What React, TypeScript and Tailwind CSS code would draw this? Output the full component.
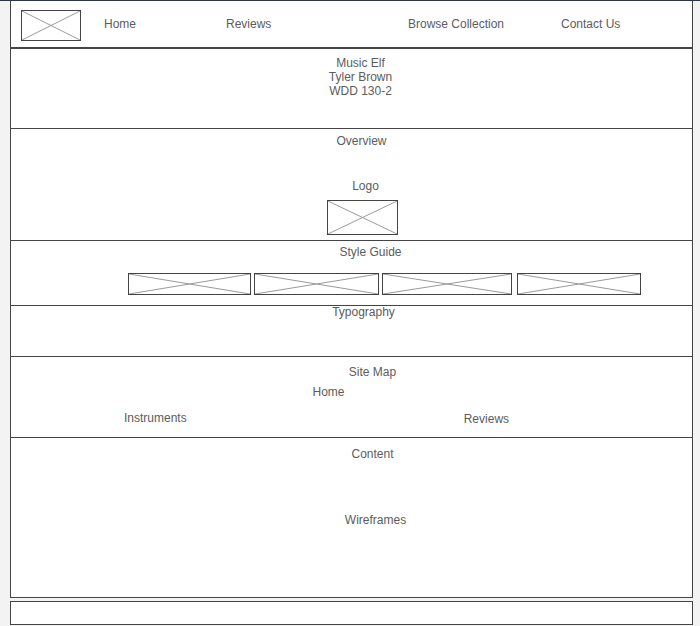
import React from "react";

function Placeholder({ className }: { className: string }) {
  return (
    <div className={"border border-[#444] bg-white " + className}>
      <svg className="block w-full h-full" viewBox="0 0 100 100" preserveAspectRatio="none">
        <line x1="0" y1="0" x2="100" y2="100" stroke="#9a9a9a" strokeWidth="1" vectorEffect="non-scaling-stroke" />
        <line x1="100" y1="0" x2="0" y2="100" stroke="#9a9a9a" strokeWidth="1" vectorEffect="non-scaling-stroke" />
      </svg>
    </div>
  );
}

export default function App() {
  return (
    <div
      className="w-[700px] h-[626px] bg-[#f3f3f3] text-[12px] leading-[14px] text-[#5c5c5c] overflow-hidden"
      style={{ fontFamily: '"Liberation Sans", Arial, sans-serif' }}
    >
      <div className="h-px bg-[#2e3440]" />
      <div className="ml-[10px] w-[683px] border-x border-[#444] bg-white flex flex-col">
        {/* Header */}
        <div className="h-[48px] border-b-2 border-[#444] flex items-start">
          <Placeholder className="ml-[10px] mt-[9px] w-[60px] h-[31px]" />
          <div className="ml-[23px] mt-[16px]">Home</div>
          <div className="ml-[90px] mt-[16px]">Reviews</div>
          <div className="ml-[136.6px] mt-[16px]">Browse Collection</div>
          <div className="ml-[57px] mt-[16px]">Contact Us</div>
        </div>

        {/* Title */}
        <div className="h-[80px] border-b border-[#444] pt-[7px] pl-[18px] text-center">
          <div>Music Elf</div>
          <div>Tyler Brown</div>
          <div>WDD 130-2</div>
        </div>

        {/* Overview */}
        <div className="h-[112px] border-b border-[#444] pt-[5px] flex flex-col">
          <div className="pl-[20px] text-center">Overview</div>
          <div className="mt-[31px] pl-[28px] text-center">Logo</div>
          <Placeholder className="mt-[7px] ml-[316px] w-[71px] h-[35px]" />
        </div>

        {/* Style Guide */}
        <div className="h-[65px] border-b border-[#444] pt-[4px] flex flex-col">
          <div className="pl-[38px] text-center">Style Guide</div>
          <div className="mt-[14px] ml-[117px] flex">
            <Placeholder className="w-[123px] h-[22px]" />
            <Placeholder className="ml-[3px] w-[125px] h-[22px]" />
            <Placeholder className="ml-[3px] w-[130px] h-[22px]" />
            <Placeholder className="ml-[5px] w-[124px] h-[22px]" />
          </div>
        </div>

        {/* Typography */}
        <div className="h-[51px] border-b border-[#444]">
          <div className="pl-[24px] text-center leading-[12px]">Typography</div>
        </div>

        {/* Site Map */}
        <div className="h-[81px] border-b border-[#444] pt-[8px] flex flex-col">
          <div className="pl-[42px] text-center">Site Map</div>
          <div className="mt-[6px] pr-[46px] text-center">Home</div>
          <div className="mt-[12px] flex items-start">
            <div className="ml-[113px]">Instruments</div>
            <div className="ml-[277px] mt-px">Reviews</div>
          </div>
        </div>

        {/* Content */}
        <div className="h-[160px] border-b border-[#444] pt-[9px] flex flex-col">
          <div className="pl-[42px] text-center">Content</div>
          <div className="mt-[52px] pl-[48px] text-center">Wireframes</div>
        </div>
      </div>

      {/* Footer */}
      <div className="mt-[3px] ml-[10px] w-[683px] h-[24px] border border-[#444] bg-white" />
    </div>
  );
}
